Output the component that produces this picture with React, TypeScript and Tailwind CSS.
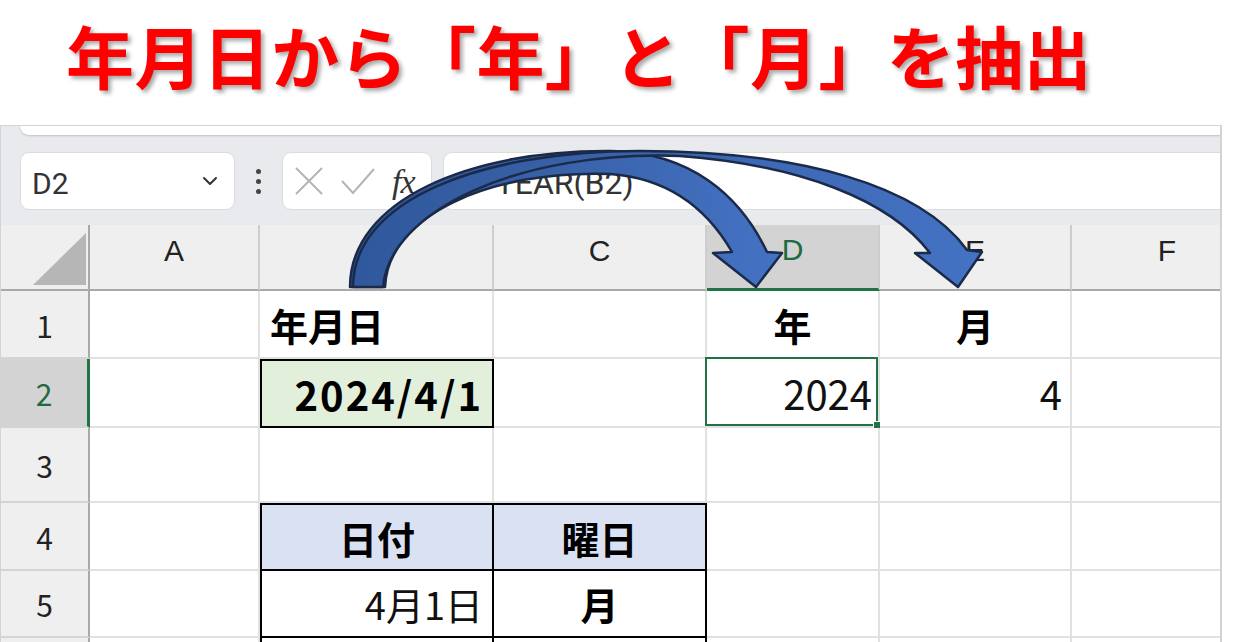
import React from 'react';
import { ChevronDown } from 'lucide-react';

type CellProps = {
  className?: string;
  children?: React.ReactNode;
};

const Cell: React.FC<CellProps> = ({ className = '', children }) => (
  <div className={`relative flex items-center border-r-2 border-b-2 border-[#e1e1e1] bg-white ${className}`}>
    {children}
  </div>
);

const ColHead: React.FC<CellProps> = ({ className = '', children }) => (
  <div
    className={`flex items-center justify-center pb-[14px] border-r-2 border-r-[#cdcdcd] border-b-2 border-b-[#a9a9a9] bg-[#efefef] text-[30px] text-[#222] font-['Liberation_Sans',sans-serif] ${className}`}
  >
    {children}
  </div>
);

const RowHead: React.FC<CellProps> = ({ className = '', children }) => (
  <div
    className={`flex items-center justify-center pt-[2px] border-r-2 border-r-[#a9a9a9] border-b-2 border-b-[#d4d4d4] bg-[#efefef] text-[30px] text-[#222] ${className}`}
  >
    {children}
  </div>
);

const Arrows: React.FC = () => (
  <svg className="absolute left-0 top-0 pointer-events-none" width="1240" height="642" viewBox="0 0 1240 642">
    <defs>
      <linearGradient id="g1" gradientUnits="userSpaceOnUse" x1="350" y1="0" x2="780" y2="0">
        <stop offset="0" stopColor="#30589c" />
        <stop offset="0.5" stopColor="#3962a9" />
        <stop offset="1" stopColor="#4472c4" />
      </linearGradient>
      <linearGradient id="g2" gradientUnits="userSpaceOnUse" x1="350" y1="0" x2="980" y2="0">
        <stop offset="0" stopColor="#30589c" />
        <stop offset="0.45" stopColor="#3a63aa" />
        <stop offset="1" stopColor="#4472c4" />
      </linearGradient>
    </defs>
    {/* to D */}
    <path
      d="M350 287 C350 200 470 150 610 151 C690 152 740 195 767 252 L782 253 L756 287 L713 253 L732 252 C705 205 665 178 610 174 C490 170 388 215 385 287 Z"
      fill="url(#g1)"
      stroke="#1b2a48"
      strokeWidth="2.5"
      strokeLinejoin="round"
    />
    {/* to E */}
    <path
      d="M353 287 C353 200 480 151 640 151 C800 151 920 185 967 250 L982 252 L958 287 L915 253 L930 253 C890 200 800 165 680 156 C520 150 390 210 383 287 Z"
      fill="url(#g2)"
      stroke="#1b2a48"
      strokeWidth="2.5"
      strokeLinejoin="round"
    />
  </svg>
);

export default function App() {
  return (
    <div className="relative w-[1240px] h-[642px] overflow-hidden bg-white font-['Noto_Sans_CJK_JP','Noto_Sans',sans-serif]">
      <h1 className="h-[125px] flex items-center pl-[66px] pb-[16px] text-[68px] font-bold leading-none tracking-[0.4px] text-[#ff0000] [text-shadow:3px_3px_4px_rgba(0,0,0,0.35)]">
        年月日から「年」と「月」を抽出
      </h1>

      <div className="w-[1222px] h-[517px] overflow-hidden border-t border-l border-r-2 border-[#d3d3d3] bg-[#e8eaee]">
        <div className="h-[9px] ml-[19px] bg-white rounded-bl-[10px] shadow-[0_1px_2px_rgba(0,0,0,0.18)]" />

        <div className="h-[90px] flex items-start pt-[17px] pl-[19px]">
          <div className="w-[215px] h-[58px] flex items-center justify-between pl-[11px] pr-[12px] bg-white rounded-[9px] border border-[#dcdcdc]">
            <span className="text-[30px] text-[#333] font-['Roboto',sans-serif] pt-[4px]">D2</span>
            <ChevronDown size={24} strokeWidth={2} className="text-[#333]" />
          </div>
          <div className="w-[47px] h-[58px] flex flex-col items-center justify-center gap-[5px]">
            <span className="w-[5px] h-[5px] rounded-full bg-[#444]" />
            <span className="w-[5px] h-[5px] rounded-full bg-[#444]" />
            <span className="w-[5px] h-[5px] rounded-full bg-[#444]" />
          </div>
          <div className="w-[150px] h-[58px] flex items-center pl-[11px] gap-[16px] bg-white rounded-[9px] border border-[#dcdcdc]">
            <svg width="30" height="30" viewBox="0 0 30 30">
              <path d="M2 2 L28 28 M28 2 L2 28" stroke="#b4b4b4" strokeWidth="2" fill="none" />
            </svg>
            <svg width="36" height="30" viewBox="0 0 36 30">
              <path d="M2 15 L13 27 L34 3" stroke="#b4b4b4" strokeWidth="2" fill="none" />
            </svg>
            <span className="text-[34px] italic text-[#333] font-['Liberation_Serif',serif] tracking-[-1px]">fx</span>
          </div>
          <div className="flex-1 ml-[11px] h-[58px] flex items-center pl-[34px] bg-white rounded-l-[9px] border border-r-0 border-[#dcdcdc]">
            <span className="text-[32px] text-[#333] font-['Roboto',sans-serif] pt-[3px]">=YEAR(B2)</span>
          </div>
        </div>

        <div className="w-[1264px] grid grid-cols-[89px_170px_234px_213px_173px_192px_192px] grid-rows-[66px_68px_69px_75px_68px_67px_20px] font-normal">
          {/* header row */}
          <div className="relative bg-[#efefef] border-r-2 border-r-[#a9a9a9] border-b-2 border-b-[#a9a9a9]">
            <svg className="absolute left-0 top-0" width="89" height="66" viewBox="0 0 89 66">
              <polygon points="32,60 85,60 85,8" fill="#b6b6b6" />
            </svg>
          </div>
          <ColHead>A</ColHead>
          <ColHead></ColHead>
          <ColHead>C</ColHead>
          <ColHead className="!bg-[#d3d3d3] !border-b-[3px] !border-b-[#217346] !text-[#1e6b41]">D</ColHead>
          <ColHead>E</ColHead>
          <ColHead>F</ColHead>

          {/* row 1 */}
          <RowHead>1</RowHead>
          <Cell />
          <Cell className="pl-[10px] text-[38px] font-bold text-black border-b-0">年月日</Cell>
          <Cell />
          <Cell className="justify-center text-[38px] font-bold text-black">年</Cell>
          <Cell className="justify-center text-[38px] font-bold text-black">月</Cell>
          <Cell />

          {/* row 2 */}
          <RowHead className="!bg-[#d3d3d3] !border-r-[3px] !border-r-[#217346] !text-[#1e6b41]">2</RowHead>
          <Cell className="border-r-0" />
          <Cell className="justify-end pr-[9px] !bg-[#e2efda] !border-2 !border-black text-[40px] font-bold tracking-[2px] text-black">
            2024/4/1
          </Cell>
          <Cell />
          <Cell className="justify-end pr-[6px] text-[40px] text-[#111]">
            2024
            <div className="absolute -left-[2px] -top-[2px] right-0 bottom-0 border-2 border-[#217346]" />
            <div className="absolute -right-[4px] -bottom-[4px] w-[9px] h-[9px] bg-[#217346] border border-white" />
          </Cell>
          <Cell className="justify-end pr-[8px] text-[40px] text-[#111]">4</Cell>
          <Cell />

          {/* row 3 */}
          <RowHead>3</RowHead>
          <Cell />
          <Cell className="border-b-0" />
          <Cell className="border-b-0" />
          <Cell />
          <Cell />
          <Cell />

          {/* row 4 */}
          <RowHead>4</RowHead>
          <Cell className="border-r-0" />
          <Cell className="justify-center !bg-[#d9e1f2] !border-2 !border-black text-[38px] font-bold text-black">日付</Cell>
          <Cell className="justify-center !bg-[#d9e1f2] border-t-2 !border-black text-[38px] font-bold text-black">曜日</Cell>
          <Cell />
          <Cell />
          <Cell />

          {/* row 5 */}
          <RowHead>5</RowHead>
          <Cell className="border-r-0" />
          <Cell className="justify-end pr-[9px] border-l-2 !border-black text-[38px] text-[#111]">4月1日</Cell>
          <Cell className="justify-center !border-black text-[38px] font-bold text-black">月</Cell>
          <Cell />
          <Cell />
          <Cell />

          {/* row 6 (partial) */}
          <RowHead />
          <Cell className="border-r-0" />
          <Cell className="border-l-2 !border-l-black !border-r-black" />
          <Cell className="!border-r-black" />
          <Cell />
          <Cell />
          <Cell />
        </div>
      </div>

      <Arrows />
    </div>
  );
}
